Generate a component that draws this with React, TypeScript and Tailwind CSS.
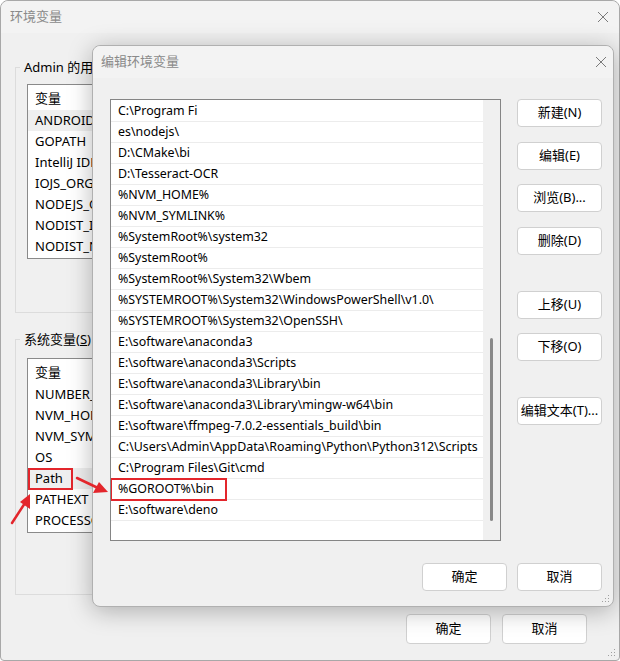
import React from "react";

const font = { fontFamily: '"Noto Sans", "Noto Sans CJK SC", sans-serif' };

const userVars = ["ANDROID", "GOPATH", "IntelliJ IDEA", "IOJS_ORG", "NODEJS_ORG", "NODIST_IOJS", "NODIST_NODE"];
const sysVars = ["NUMBER_OF", "NVM_HOME", "NVM_SYMLINK", "OS", "Path", "PATHEXT", "PROCESSOR"];

const paths = [
  "C:\\Program Fi",
  "es\\nodejs\\",
  "D:\\CMake\\bi",
  "D:\\Tesseract-OCR",
  "%NVM_HOME%",
  "%NVM_SYMLINK%",
  "%SystemRoot%\\system32",
  "%SystemRoot%",
  "%SystemRoot%\\System32\\Wbem",
  "%SYSTEMROOT%\\System32\\WindowsPowerShell\\v1.0\\",
  "%SYSTEMROOT%\\System32\\OpenSSH\\",
  "E:\\software\\anaconda3",
  "E:\\software\\anaconda3\\Scripts",
  "E:\\software\\anaconda3\\Library\\bin",
  "E:\\software\\anaconda3\\Library\\mingw-w64\\bin",
  "E:\\software\\ffmpeg-7.0.2-essentials_build\\bin",
  "C:\\Users\\Admin\\AppData\\Roaming\\Python\\Python312\\Scripts",
  "C:\\Program Files\\Git\\cmd",
  "%GOROOT%\\bin",
  "E:\\software\\deno",
];

function CloseX() {
  return (
    <svg width="12" height="12" viewBox="0 0 12 12">
      <path d="M1 1L11 11M11 1L1 11" stroke="#7a7a7a" strokeWidth="1" />
    </svg>
  );
}

function Grip() {
  return (
    <svg width="8" height="8" viewBox="0 0 8 8" className="absolute bottom-[3px] right-[3px]">
      <rect x="6" y="0" width="1" height="1" fill="#a0a0a0" />
      <rect x="3" y="3" width="1" height="1" fill="#a0a0a0" />
      <rect x="6" y="3" width="1" height="1" fill="#a0a0a0" />
      <rect x="0" y="6" width="1" height="1" fill="#a0a0a0" />
      <rect x="3" y="6" width="1" height="1" fill="#a0a0a0" />
      <rect x="6" y="6" width="1" height="1" fill="#a0a0a0" />
    </svg>
  );
}

function Btn({ label, className = "" }: { label: string; className?: string }) {
  return (
    <div
      className={
        "flex h-[28px] w-[85px] items-center justify-center rounded-[4px] border border-[#d0d0d0] bg-white text-[13px] text-black " +
        className
      }
    >
      {label}
    </div>
  );
}

function VarList({ items, selected, boxed }: { items: string[]; selected: number; boxed?: number }) {
  return (
    <div className="h-[175px] w-[300px] overflow-hidden border border-[#8a8a8a] bg-white pt-[2px]">
      <div className="flex h-[23px] items-center pl-[7px] text-[13px] text-black">变量</div>
      {items.map((v, i) => (
        <div
          key={v}
          className={
            "relative flex h-[21px] items-center pl-[7px] text-[13px] text-black " +
            (i === selected ? "bg-[#efefef]" : "")
          }
        >
          {v}
          {i === boxed && (
            <span className="absolute left-0 top-0 h-[22px] w-[45px] border-2 border-[#e3262c]" />
          )}
        </div>
      ))}
    </div>
  );
}

export default function App() {
  return (
    <div className="relative h-[661px] w-[620px] overflow-hidden bg-white" style={font}>
      {/* outer window */}
      <div className="relative flex h-[661px] w-[620px] flex-col rounded-t-[8px] rounded-b-[4px] border border-[#a8a8a8] bg-[#f0f0f0]">
        <div className="flex h-[32px] items-center justify-between rounded-t-[8px] bg-[#f3f3f3] pl-[9px] pr-[10px]">
          <span className="text-[13px] text-[#8a8a8a]">环境变量</span>
          <CloseX />
        </div>

        <div className="flex flex-col pl-[14px] pr-[14px]">
          <fieldset className="mt-[25px] h-[255px] border border-[#dcdcdc]">
            <legend className="ml-[4px] px-[4px] text-[13px] leading-[18px] text-black">Admin 的用户变量</legend>
            <div className="ml-[11px] mt-[8px]">
              <VarList items={userVars} selected={0} />
            </div>
          </fieldset>

          <fieldset className="mt-[17px] h-[265px] border border-[#dcdcdc]">
            <legend className="ml-[4px] px-[4px] text-[13px] leading-[18px] text-black">
              系统变量(<span className="underline">S</span>)
            </legend>
            <div className="ml-[11px] mt-[10px]">
              <VarList items={sysVars} selected={4} boxed={4} />
            </div>
          </fieldset>
        </div>

        <div className="mt-[19px] flex justify-end gap-[11px] pr-[32px]">
          <Btn label="确定" className="h-[30px] w-[85px] bg-[#f5f5f5]" />
          <Btn label="取消" className="h-[30px] w-[85px] bg-[#f5f5f5]" />
        </div>
        <Grip />
      </div>

      {/* edit dialog on top */}
      <div className="absolute left-[92px] top-[45px] flex h-[562px] w-[522px] flex-col rounded-[8px] border border-[#b0b0b0] bg-[#f0f0f0] shadow-[0_4px_24px_rgba(0,0,0,0.28)]">
        <div className="flex h-[32px] items-center justify-between rounded-t-[8px] bg-[#f3f3f3] pl-[8px] pr-[6px]">
          <span className="text-[13px] text-[#8a8a8a]">编辑环境变量</span>
          <CloseX />
        </div>

        <div className="mt-[21px] flex pl-[17px]">
          <div className="flex h-[442px] w-[391px] border border-[#858585] bg-white">
            <div className="min-w-0 flex-1 overflow-hidden pt-[1px]">
              {paths.map((p, i) => (
                <div
                  key={i}
                  className="relative flex h-[21px] items-center whitespace-nowrap border-b border-[#ececec] pl-[7px] text-[12.4px] text-black"
                >
                  {p}
                  {p === "%GOROOT%\\bin" && (
                    <span className="absolute -left-px -top-px h-[23px] w-[117px] border-2 border-[#e3262c]" />
                  )}
                </div>
              ))}
            </div>
            <div className="relative w-[17px] shrink-0 bg-[#f0f0f0]">
              <div className="absolute left-[7px] top-[238px] h-[183px] w-[3px] rounded-full bg-[#8a8a8a]" />
            </div>
          </div>

          <div className="ml-[16px] flex flex-col">
            <Btn label="新建(N)" />
            <Btn label="编辑(E)" className="mt-[15px]" />
            <Btn label="浏览(B)..." className="mt-[14px]" />
            <Btn label="删除(D)" className="mt-[15px]" />
            <Btn label="上移(U)" className="mt-[36px]" />
            <Btn label="下移(O)" className="mt-[14px]" />
            <Btn label="编辑文本(T)..." className="mt-[36px]" />
          </div>
        </div>

        <div className="mt-[22px] flex justify-end gap-[10px] pr-[11px]">
          <Btn label="确定" />
          <Btn label="取消" />
        </div>
        <Grip />
      </div>

      {/* red annotation arrows */}
      <svg className="pointer-events-none absolute left-0 top-0" width="620" height="661">
        <line x1="77" y1="478" x2="98" y2="488" stroke="#e3262c" strokeWidth="2.5" strokeLinecap="round" />
        <polygon points="108,492 93,493 99,482" fill="#e3262c" />
        <line x1="12" y1="523" x2="25" y2="503" stroke="#e3262c" strokeWidth="2.5" strokeLinecap="round" />
        <polygon points="30,494 30,509 20,502" fill="#e3262c" />
      </svg>
    </div>
  );
}
